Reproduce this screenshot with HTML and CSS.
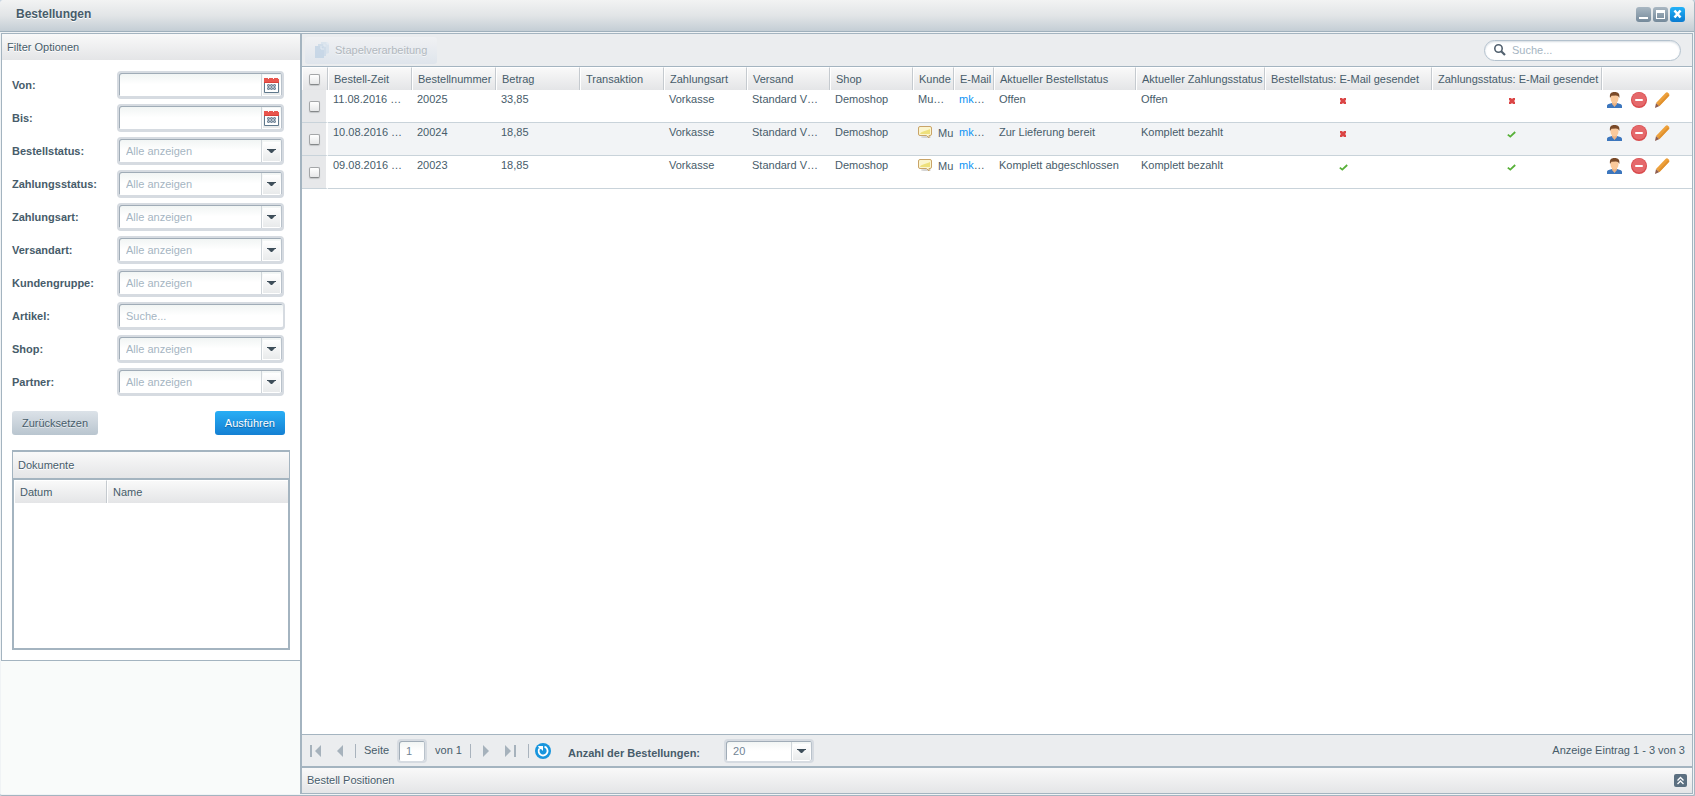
FILE: index.html
```html
<!DOCTYPE html>
<html lang="de">
<head>
<meta charset="utf-8">
<title>Bestellungen</title>
<link rel="stylesheet" href="styles.css">
</head>
<body>
<svg class="sprites" aria-hidden="true">
  <symbol id="calendar" viewBox="0 0 15 15">
    <path d="M.5 4v10.500h14V4" fill="#fff" stroke="#5f788c"/>
    <path d="M0 0h4v1h1V0h4v1h1V0h4v1h1v4H0z" fill="#e8554d"/>
    <path d="M0 4h15v1H0z" fill="#d8423b"/>
    <path d="M3 6h9v6H3z" fill="#b4bfca"/>
    <path d="M4 6h1v1H4zM7 6h1v1H7zM10 6h1v1h-1zM3 7h1v1H3zM5 7h2v1H5zM8 7h2v1H8zM11 7h1v1h-1zM4 8h1v2H4zM7 8h1v2H7zM10 8h1v2h-1zM3 10h1v1H3zM5 10h2v1H5zM8 10h2v1H8zM11 10h1v1h-1zM4 11h1v1H4zM7 11h1v1H7zM10 11h1v1h-1z" fill="#74889a"/>
  </symbol>
  <symbol id="arrow" viewBox="0 0 9 5"><path d="M0 0h9v1H8L5 4H4L1 1H0z" fill="#3e4e5a"/></symbol>
  <symbol id="cross" viewBox="0 0 6 6"><path d="M0 0h2l1 1 1-1h2v2L5 3l1 1v2H4L3 5 2 6H0V4l1-1-1-1z" fill="#db4545"/></symbol>
  <symbol id="tick" viewBox="0 0 9 7"><path d="M.8 3.600l2.500 2L8.200 1" fill="none" stroke="#57b038" stroke-width="1.800"/></symbol>
  <symbol id="note" viewBox="0 0 14 13">
    <ellipse cx="8" cy="11" rx="5" ry="1" fill="#d4d4d4"/>
    <path d="M2 .5h10a1.500 1.500 0 0 1 1.500 1.500v6A1.500 1.500 0 0 1 12 9.500h-1V12L8.500 9.500H2A1.500 1.500 0 0 1 .5 8V2A1.500 1.500 0 0 1 2 .5z" fill="#fbf5cf" stroke="#c9a468"/>
    <path d="M2 8C3 5 8 5 12 3v5z" fill="#eee07c"/>
  </symbol>
  <symbol id="user" viewBox="0 0 16 16">
    <path d="M0 16v-2c0-2 3-2.500 5-3h5c2 .5 5 1 5 3v2z" fill="#3c76bd"/>
    <path d="M5 10h5v2l-2.500 3L5 12z" fill="#e9b183"/>
    <ellipse cx="7.500" cy="6.500" rx="4" ry="5" fill="#fac99b"/>
    <path d="M3 6C2.500 2 3.500 0 7.500 0s5.500 2 4.800 6L11 4 9 3.500 4.500 3.800z" fill="#7a4a29"/>
  </symbol>
  <symbol id="remove" viewBox="0 0 16 16">
    <circle cx="8" cy="8" r="8" fill="#d94a4c"/><circle cx="8" cy="7.500" r="7" fill="#e5696b"/>
    <rect x="4" y="7" width="8" height="2" rx="1" fill="#fff"/>
  </symbol>
  <symbol id="pencil" viewBox="0 0 15 16">
    <path d="M0 16l1-5 3.500 3z" fill="#8e5d50"/>
    <path d="M1 11L10.500 1Q12 -.5 13.500 1.200T14 4L4.500 14z" fill="#eda03b"/>
    <path d="M3 12.800L12.800 2.500 14.300 3.500 4.500 14z" fill="#e0912e"/>
  </symbol>
</svg>

<main class="window">
  <header class="titlebar">
    <h1>Bestellungen</h1>
    <div class="tools">
      <button class="tool" aria-label="Minimieren"><svg width="15" height="15"><path d="M3 10h9v2H3z" fill="#fff"/></svg></button>
      <button class="tool" aria-label="Maximieren"><svg width="15" height="15"><path d="M3 3h9v9H3zm1 3v5h7V6z" fill="#fff" fill-rule="evenodd"/></svg></button>
      <button class="tool close" aria-label="Schließen"><svg width="15" height="15"><path d="M4.500 3.500l6 7M10.500 3.500l-6 7" stroke="#fff" stroke-width="2.600"/></svg></button>
    </div>
  </header>
  <div class="content">
    <aside class="sidebar">
      <section class="filter">
        <h2 class="bar">Filter Optionen</h2>
        <form class="fields">
          <div class="row"><label for="von">Von:</label><div class="field"><input id="von" type="text"><button type="button" class="trigger" aria-label="Datum wählen"><svg width="15" height="15"><use href="#calendar"/></svg></button></div></div>
          <div class="row"><label for="bis">Bis:</label><div class="field"><input id="bis" type="text"><button type="button" class="trigger" aria-label="Datum wählen"><svg width="15" height="15"><use href="#calendar"/></svg></button></div></div>
          <div class="row"><label for="bs">Bestellstatus:</label><div class="field"><select id="bs"><option>Alle anzeigen</option></select><span class="trigger"><svg width="9" height="5"><use href="#arrow"/></svg></span></div></div>
          <div class="row"><label for="zs">Zahlungsstatus:</label><div class="field"><select id="zs"><option>Alle anzeigen</option></select><span class="trigger"><svg width="9" height="5"><use href="#arrow"/></svg></span></div></div>
          <div class="row"><label for="za">Zahlungsart:</label><div class="field"><select id="za"><option>Alle anzeigen</option></select><span class="trigger"><svg width="9" height="5"><use href="#arrow"/></svg></span></div></div>
          <div class="row"><label for="va">Versandart:</label><div class="field"><select id="va"><option>Alle anzeigen</option></select><span class="trigger"><svg width="9" height="5"><use href="#arrow"/></svg></span></div></div>
          <div class="row"><label for="kg">Kundengruppe:</label><div class="field"><select id="kg"><option>Alle anzeigen</option></select><span class="trigger"><svg width="9" height="5"><use href="#arrow"/></svg></span></div></div>
          <div class="row"><label for="ar">Artikel:</label><div class="field wide"><input id="ar" type="text" placeholder="Suche..."></div></div>
          <div class="row"><label for="sh">Shop:</label><div class="field"><select id="sh"><option>Alle anzeigen</option></select><span class="trigger"><svg width="9" height="5"><use href="#arrow"/></svg></span></div></div>
          <div class="row"><label for="pa">Partner:</label><div class="field"><select id="pa"><option>Alle anzeigen</option></select><span class="trigger"><svg width="9" height="5"><use href="#arrow"/></svg></span></div></div>
          <div class="actions"><button type="reset" class="btn">Zurücksetzen</button><button type="button" class="btn primary">Ausführen</button></div>
        </form>
        <section class="documents">
          <h2 class="bar">Dokumente</h2>
          <div class="docgrid">
            <table class="grid"><colgroup><col class="c-date"><col></colgroup><thead><tr><th>Datum</th><th>Name</th></tr></thead></table>
          </div>
        </section>
      </section>
    </aside>
    <section class="orders">
      <div class="toolbar">
        <button class="batch" disabled><svg width="15" height="16"><path d="M6 0h6l2 2v9l-3 1H6z" fill="#d3e0ec"/><path d="M3 2h6l2 2v10H3z" fill="#c6d7e7"/><path d="M0 4h6l3 2v10H0z" fill="#bcd0e4"/><path d="M6 4v3h3M9 2v2h2M12 0v2h2" fill="none" stroke="#e4edf5"/></svg>Stapelverarbeitung</button>
        <div class="search"><svg width="12" height="12"><circle cx="4.500" cy="4.500" r="3.700" fill="none" stroke="#52616f" stroke-width="1.600"/><path d="M7.200 7.200L11 11" stroke="#52616f" stroke-width="2.200"/></svg><input type="search" aria-label="Suche" placeholder="Suche..."></div>
      </div>
      <div class="scroller">
        <table class="grid list">
          <colgroup><col class="c26"><col class="c84"><col class="c84"><col class="c84"><col class="c84"><col class="c83"><col class="c83"><col class="c83"><col class="c41"><col class="c40"><col class="c142"><col class="c129"><col class="c167"><col class="c170"><col></colgroup>
          <thead><tr><th class="check"><input type="checkbox" aria-label="Alle auswählen"></th><th>Bestell-Zeit</th><th>Bestellnummer</th><th>Betrag</th><th>Transaktion</th><th>Zahlungsart</th><th>Versand</th><th>Shop</th><th>Kunde</th><th>E-Mail</th><th>Aktueller Bestellstatus</th><th>Aktueller Zahlungsstatus</th><th>Bestellstatus: E-Mail gesendet</th><th>Zahlungsstatus: E-Mail gesendet</th><th></th></tr></thead>
          <tbody>
            <tr><td class="check"><input type="checkbox" aria-label="20025"></td><td>11.08.2016 …</td><td>20025</td><td>33,85</td><td></td><td>Vorkasse</td><td>Standard V…</td><td>Demoshop</td><td>Mu…</td><td><a href="#">mk</a>…</td><td>Offen</td><td>Offen</td>
              <td class="state"><svg width="6" height="6"><use href="#cross"/></svg></td><td class="state"><svg width="6" height="6"><use href="#cross"/></svg></td>
              <td class="ops"><div><button aria-label="Kunde"><svg width="16" height="16"><use href="#user"/></svg></button><button aria-label="Löschen"><svg width="16" height="16"><use href="#remove"/></svg></button><button aria-label="Bearbeiten"><svg width="15" height="16"><use href="#pencil"/></svg></button></div></td></tr>
            <tr><td class="check"><input type="checkbox" aria-label="20024"></td><td>10.08.2016 …</td><td>20024</td><td>18,85</td><td></td><td>Vorkasse</td><td>Standard V…</td><td>Demoshop</td><td><div class="noted"><svg width="14" height="13"><use href="#note"/></svg>Mu</div></td><td><a href="#">mk</a>…</td><td>Zur Lieferung bereit</td><td>Komplett bezahlt</td>
              <td class="state"><svg width="6" height="6"><use href="#cross"/></svg></td><td class="state"><svg width="9" height="7"><use href="#tick"/></svg></td>
              <td class="ops"><div><button aria-label="Kunde"><svg width="16" height="16"><use href="#user"/></svg></button><button aria-label="Löschen"><svg width="16" height="16"><use href="#remove"/></svg></button><button aria-label="Bearbeiten"><svg width="15" height="16"><use href="#pencil"/></svg></button></div></td></tr>
            <tr><td class="check"><input type="checkbox" aria-label="20023"></td><td>09.08.2016 …</td><td>20023</td><td>18,85</td><td></td><td>Vorkasse</td><td>Standard V…</td><td>Demoshop</td><td><div class="noted"><svg width="14" height="13"><use href="#note"/></svg>Mu</div></td><td><a href="#">mk</a>…</td><td>Komplett abgeschlossen</td><td>Komplett bezahlt</td>
              <td class="state"><svg width="9" height="7"><use href="#tick"/></svg></td><td class="state"><svg width="9" height="7"><use href="#tick"/></svg></td>
              <td class="ops"><div><button aria-label="Kunde"><svg width="16" height="16"><use href="#user"/></svg></button><button aria-label="Löschen"><svg width="16" height="16"><use href="#remove"/></svg></button><button aria-label="Bearbeiten"><svg width="15" height="16"><use href="#pencil"/></svg></button></div></td></tr>
          </tbody>
        </table>
      </div>
      <footer class="pager">
        <button class="nav" aria-label="Erste Seite"><svg width="12" height="12"><path d="M0 0h2v12H0zM11 0v12L5 6z" fill="#a6b2bc"/></svg></button>
        <button class="nav" aria-label="Vorherige Seite"><svg width="7" height="12"><path d="M6 0v12L0 6z" fill="#a6b2bc"/></svg></button>
        <span class="sep"></span>
        <label for="page">Seite</label>
        <div class="field page"><input id="page" type="text" value="1"></div>
        <span class="total">von 1</span>
        <span class="sep"></span>
        <button class="nav" aria-label="Nächste Seite"><svg width="7" height="12"><path d="M0 0l6 6-6 6z" fill="#a6b2bc"/></svg></button>
        <button class="nav" aria-label="Letzte Seite"><svg width="12" height="12"><path d="M0 0l6 6-6 6zM9 0h2v12H9z" fill="#a6b2bc"/></svg></button>
        <span class="sep"></span>
        <button class="refresh" aria-label="Aktualisieren"><svg width="16" height="16"><circle cx="8" cy="8" r="8" fill="#1795dd"/><path d="M9.500 3.700A4.500 4.500 0 1 1 4.200 5.700" fill="none" stroke="#fff" stroke-width="1.800"/><path d="M3 3h5v5L6.300 6.300 4.500 6z" fill="#fff"/></svg></button>
        <label class="count" for="count">Anzahl der Bestellungen:</label>
        <div class="field size"><select id="count"><option>20</option></select><span class="trigger"><svg width="9" height="5"><use href="#arrow"/></svg></span></div>
        <span class="info">Anzeige Eintrag 1 - 3 von 3</span>
      </footer>
      <div class="bar positions"><h2>Bestell Positionen</h2><button class="expand" aria-label="Aufklappen"><svg width="13" height="13"><path d="M3.500 6.500l3-3 3 3M3.500 10l3-3 3 3" fill="none" stroke="#fff" stroke-width="1.300"/></svg></button></div>
    </section>
  </div>
</main>
</body>
</html>
```
FILE: styles.css
```css
* { box-sizing: border-box; }
body { margin: 0; background: #c9d6e2; }
body, button, input, select { font: 11px/13px "Liberation Sans", Arial, sans-serif; color: #475c6a; }
h1, h2 { margin: 0; font-size: 11px; font-weight: normal; }
button { padding: 0; border: 0; background: none; }
svg { display: block; flex: none; }
.sprites { display: none; }

.window { display: flex; flex-direction: column; min-height: 100vh; padding-right: 1px; background: #f0f3f5; border-right: 1px solid #a4b4c0; border-bottom: 1px solid #a4b4c0; border-radius: 4px 4px 2px 2px; overflow: hidden; }
.titlebar { display: flex; align-items: center; justify-content: space-between; height: 32px; margin-right: -1px; padding: 0 9px 2px 16px; background: linear-gradient(#f2f3f3, #e2e5e7 50%, #c4ced5); border-bottom: 1px solid #9fb0bc; }
.titlebar h1 { font-size: 12px; font-weight: bold; text-shadow: 0 1px 0 #fff; }
.tools { display: flex; gap: 2px; }
.tool { width: 15px; height: 15px; border-radius: 3px; background: linear-gradient(#a9b7c2, #74899a); }
.tool.close { background: linear-gradient(#22b2f8, #0a7bd0); }

.content { display: flex; flex: 1; padding: 1px 0 1px 1px; }
.sidebar { width: 299px; flex: none; background: #f9fbfa; }
.filter { border: 1px solid #a4b4c0; border-right: 0; background: #fff; padding-bottom: 10px; }
.bar { display: flex; align-items: center; height: 26px; padding: 0 5px; background: linear-gradient(#f9f9f9, #e4e5e7); text-shadow: 0 1px 0 #fff; }

.fields { padding: 11px 15px 0 10px; }
.row { display: flex; align-items: center; height: 28px; margin-bottom: 5px; }
.row label { width: 105px; font-weight: bold; }
.field { display: grid; grid-template-columns: 1fr 20px; width: 167px; height: 28px; border: 2px solid #d6dbe1; border-bottom-width: 3px; border-radius: 4px; background: linear-gradient(#f0f4f3, #fff 50%); box-shadow: inset 1px 1px 0 #a0acb7, inset -1px 0 0 #b9c2cb; padding: 1px 1px 0; }
.field.wide { width: 168px; grid-template-columns: 1fr; box-shadow: inset 1px 1px 0 #a0acb7; }
.field input, .field select { grid-row: 1; grid-column: 1 / -1; width: 100%; min-width: 0; height: 100%; margin: 0; padding: 0 6px; border: 0; border-radius: 0; background: none; appearance: none; outline: 0; color: #a5b5c2; }
.field input:not(:last-child) { grid-column: 1; }
::placeholder { color: #a5b5c2; opacity: 1; }
.field .trigger { grid-row: 1; grid-column: 2; display: flex; align-items: center; justify-content: center; border-left: 1px solid #cfd5da; background: linear-gradient(#fff, #e8eaeb) content-box; padding: 1px; }
.field span.trigger { pointer-events: none; padding-top: 2px; }

.actions { display: flex; justify-content: space-between; margin-top: 15px; }
.btn { height: 24px; padding: 0 10px; border-radius: 3px; background: linear-gradient(#dce2e8, #b9c5cf); text-shadow: 0 1px 0 #e6eaee; }
.primary { background: linear-gradient(#28aef5, #1480d3); color: #fff; text-shadow: 0 1px 1px #0d5f9f; }

.documents { margin: 15px 10px 0 10px; border: 1px solid #a4b4c0; border-top-width: 2px; border-bottom: 0; }
.docgrid { height: 172px; border: solid #a4b4c0; border-width: 2px 1px; }

.grid { width: 100%; table-layout: fixed; border-collapse: separate; border-spacing: 0; }
.grid th { height: 23px; padding: 0 0 0 5px; border-left: 1px solid #fff; border-top: 1px solid #fff; border-right: 1px solid #c5cacf; background: linear-gradient(#f9f9f9, #e4e5e7); font-weight: normal; text-align: left; white-space: nowrap; overflow: hidden; }
.grid th:last-child { border-right: 0; }
.c-date { width: 93px; }

.orders { display: flex; flex-direction: column; flex: 1; min-width: 0; border: 1px solid #a4b4c0; border-left-width: 2px; background: #fff; }
.toolbar { display: flex; align-items: center; justify-content: space-between; height: 33px; padding: 0 11px 0 3px; background: #ebedef; border-bottom: 1px solid #a4b4c0; }
.batch { display: flex; align-items: center; gap: 5px; height: 27px; padding: 0 10px; border-radius: 3px; background: linear-gradient(#f0f1f3, #dfe5ec); color: #b1b8be; text-shadow: 0 1px 0 #f4f6f8; }
.batch svg { opacity: .7; }
.search { display: flex; align-items: center; gap: 6px; width: 197px; height: 21px; padding: 0 9px; border: 1px solid #b3c1cd; border-radius: 11px; background: #fff; box-shadow: inset 0 1px 2px #d5dce2; }
.search input { flex: 1; min-width: 0; padding: 0; border: 0; outline: 0; background: none; }

.scroller { flex: 1; overflow: hidden; }
.c26 { width: 26px; } .c84 { width: 84px; } .c83 { width: 83px; } .c41 { width: 41px; } .c40 { width: 40px; }
.c142 { width: 142px; } .c129 { width: 129px; } .c167 { width: 167px; } .c170 { width: 170px; }
.list td { height: 33px; padding: 3px 0 0 5px; border-bottom: 1px solid #c9d3da; vertical-align: top; white-space: nowrap; overflow: hidden; }
.list tr:nth-child(even) td { background: #f2f4f6; }
.list th.check { padding: 0 0 0 6px; }
.list tr td.check { padding: 0 0 0 7px; vertical-align: middle; background: #e7e8ea; border-right: 2px solid #fff; }
.check input { display: block; width: 11px; height: 11px; margin: 0; appearance: none; border: 1px solid #a4a6a8; border-bottom-color: #85888a; border-radius: 2px; background: linear-gradient(#fff, #e6e7e8); box-shadow: 0 1px 1px #c3c5c7; }
.list td a { color: #0c93f5; text-decoration: none; }
.list td.state { padding: 8px 11px 0 0; }
.state svg { margin: 0 auto; }
.noted { display: flex; gap: 6px; padding-top: 1px; }
.noted svg { margin-top: -1px; }
.list td.ops { padding: 2px 0 0 5px; }
.ops div { display: flex; gap: 8px; }

.pager { display: flex; align-items: center; height: 32px; padding: 0 7px 0 8px; background: #ebedef; border-top: 1px solid #a4b4c0; }
.nav { margin-right: 15px; }
.nav + .sep { margin-left: -4px; }
.sep { width: 1px; height: 14px; background: #a9b3bd; margin-right: 8px; }
.pager .field { height: 24px; border-bottom-width: 2px; }
.pager .field.page { width: 30px; margin: 0 8px; grid-template-columns: 1fr; }
.pager .field input, .pager .field select { color: #718494; }
.total { margin-right: 8px; }
.total + .sep { margin-right: 12px; }
.refresh { width: 16px; height: 16px; margin-left: -2px; }
.count { margin-left: 17px; padding-top: 6px; font-weight: bold; }
.pager .field.size { width: 90px; margin-left: 24px; }
.info { margin-left: auto; }
.positions { height: 27px; justify-content: space-between; border-top: 2px solid #a4b4c0; }
.expand { width: 13px; height: 13px; border-radius: 2px; background: #5b6f80; }
```
